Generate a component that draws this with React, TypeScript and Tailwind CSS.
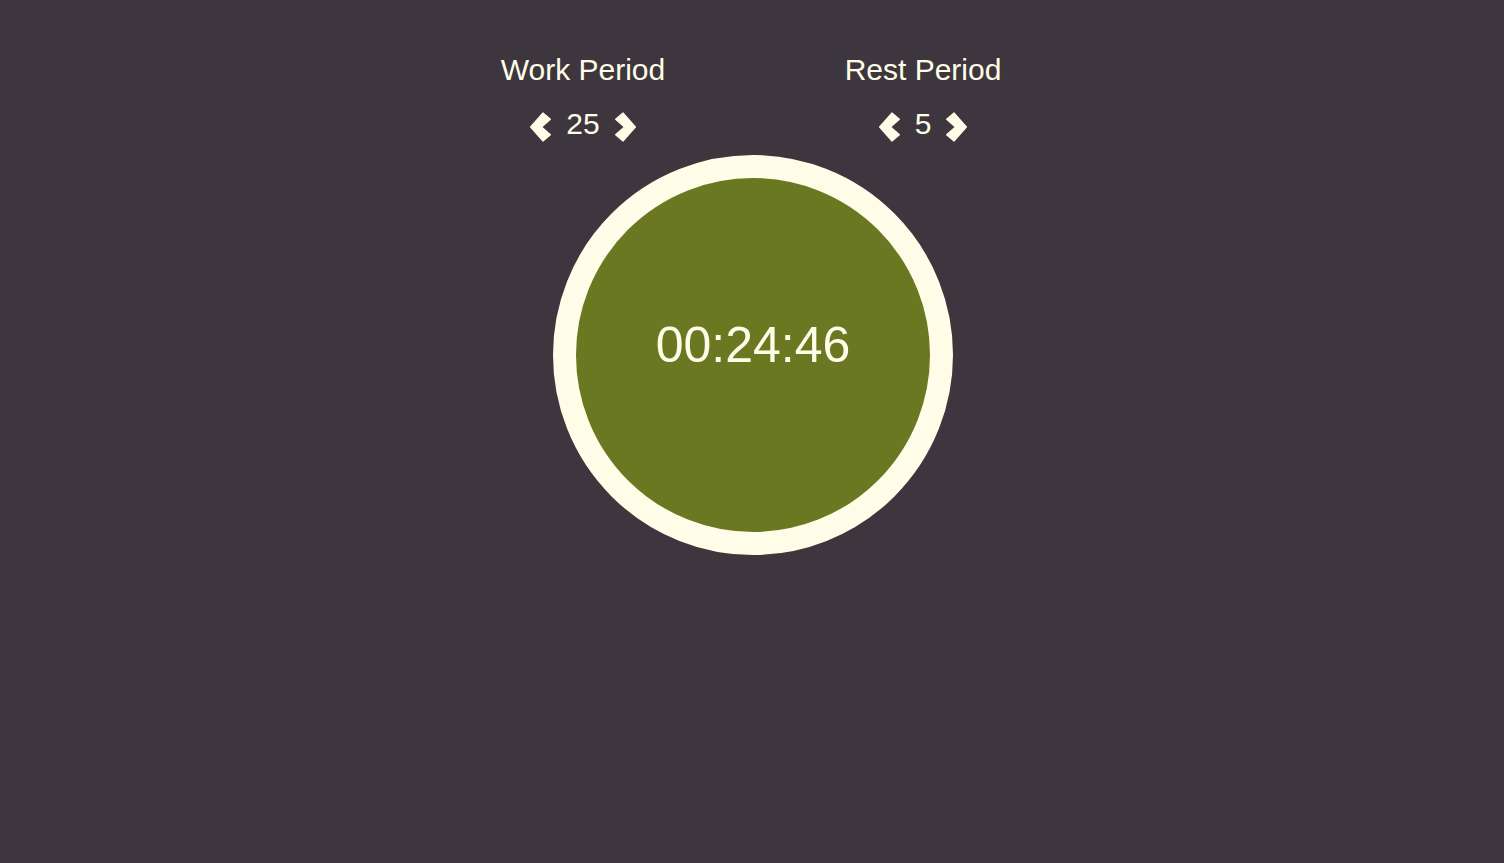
import React from "react";

const Chevron = ({ dir }: { dir: "left" | "right" }) => (
  <svg width="21" height="30" viewBox="0 0 21 30" className="shrink-0">
    <polygon
      points={
        dir === "left"
          ? "0.6,15 13,1 20.4,7.2 11.6,15 20.4,22.8 13,29"
          : "20.4,15 8,1 0.6,7.2 9.4,15 0.6,22.8 8,29"
      }
      fill="#fffde7"
      stroke="#fffde7"
      strokeWidth="1.2"
      strokeLinejoin="round"
    />
  </svg>
);

const PeriodControl = ({ label, value }: { label: string; value: number }) => (
  <div className="w-[340px] flex flex-col items-center">
    <div className="text-[30px] leading-[34.5px]">{label}</div>
    <div className="mt-[19.5px] flex items-end gap-[15px]">
      <Chevron dir="left" />
      <span className="text-[30px] leading-[34.5px]">{value}</span>
      <Chevron dir="right" />
    </div>
  </div>
);

export default function App() {
  return (
    <div
      className="w-full h-[863px] pl-[2px] bg-[#3d363f] text-[#fffde7] flex flex-col items-center"
      style={{ fontFamily: '"Liberation Sans", Arial, sans-serif' }}
    >
      <div className="mt-[53px] flex justify-center">
        <PeriodControl label="Work Period" value={25} />
        <PeriodControl label="Rest Period" value={5} />
      </div>

      <div className="mt-[13px] w-[400px] h-[400px] rounded-full border-[23px] border-[#fffde7] bg-[#6b7822] flex items-center justify-center">
        <span className="text-[50px] leading-[57.5px] mb-[17px]">00:24:46</span>
      </div>
    </div>
  );
}
